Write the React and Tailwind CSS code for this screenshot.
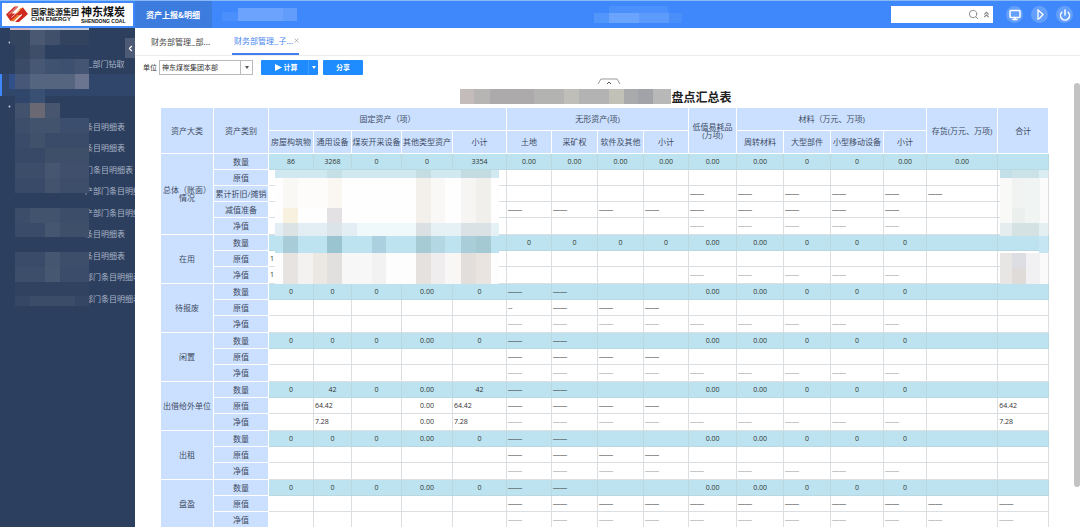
import { Search, ChevronsUp, Monitor, Power, ChevronLeft, X } from 'lucide-react';

const DASH = '——';

const COLUMN_WIDTHS = [53, 55, 45, 38, 50, 51, 54, 45, 46, 46, 45, 48, 47, 47, 53, 43, 71, 51];

const SUB_HEADERS_LEFT = [
  '房屋构筑物', '通用设备', '煤炭开采设备', '其他类型资产', '小计',
  '土地', '采矿权', '软件及其他', '小计',
];
const SUB_HEADERS_RIGHT = ['周转材料', '大型部件', '小型移动设备', '小计'];

// One string per row: "-" is a dash cell, "." is an empty cell
const IDLE_COUNT = '0 0 0 0.00 0 - - . . 0.00 0.00 0 0 0 . .';
const IDLE_ORIGIN = '. . . . . - - - - . . . . . . .';
const IDLE_NET = '. . . . . - - - - - - - - - . .';

const GROUPS = [
  {
    name: '总体（账面）\n情况',
    rows: [
      { label: '数量', cells: '86 3268 0 0 3354 0.00 0.00 0.00 0.00 0.00 0.00 0 0 0.00 0.00 .' },
      { label: '原值', cells: '. . . . . . . . . . . . . . . .' },
      { label: '累计折旧/摊销', cells: '. . . . . . . . . - - - - - - .' },
      { label: '减值准备', cells: '. . . . . - - - - - - - - - . .' },
      { label: '净值', cells: '. . . . . . . . . - - - - - . .' },
    ],
  },
  {
    name: '在用',
    rows: [
      { label: '数量', cells: '. . . . . 0 0 0 0 0.00 0.00 0 0 0 . .' },
      { label: '原值', cells: '1 . . . . . . . . . . . . . . .' },
      { label: '净值', cells: '1 . . . . . . . . - - - - - . .' },
    ],
  },
  {
    name: '待报废',
    rows: [
      { label: '数量', cells: IDLE_COUNT },
      { label: '原值', cells: '. . . . . -- - - - . . . . . . .' },
      { label: '净值', cells: IDLE_NET },
    ],
  },
  {
    name: '闲置',
    rows: [
      { label: '数量', cells: IDLE_COUNT },
      { label: '原值', cells: IDLE_ORIGIN },
      { label: '净值', cells: IDLE_NET },
    ],
  },
  {
    name: '出借给外单位',
    rows: [
      { label: '数量', cells: '0 42 0 0.00 42 - - . . 0.00 0.00 0 0 0 . .' },
      { label: '原值', cells: '. 64.42 . 0.00 64.42 - - - - . . . . . . 64.42' },
      { label: '净值', cells: '. 7.28 . 0.00 7.28 - - - - - - - - - . 7.28' },
    ],
  },
  {
    name: '出租',
    rows: [
      { label: '数量', cells: IDLE_COUNT },
      { label: '原值', cells: IDLE_ORIGIN },
      { label: '净值', cells: IDLE_NET },
    ],
  },
  {
    name: '盘盈',
    rows: [
      { label: '数量', cells: IDLE_COUNT },
      { label: '原值', cells: '. . . . . - - - - - - - - - - -' },
      { label: '净值', cells: '. . . . . - - - - - - - - - - -' },
    ],
  },
];

const MENU_ITEMS = [
  '条目明细表', '条目明细表', '门条目明细表', '产部门条目明细表', '产部门条目明细表',
  '条目明细表', '条目明细表', '部门条目明细表', '部门条目明细表',
];

// Masked areas, each tile is [x, y, width, height, colour]
const SIDEBAR_TILES = [
  [10, 0, 20, 2, '#d9b9c2'], [30, 0, 59, 2, '#c3cad6'],
  [10, 2, 20, 15, '#33455f'], [30, 2, 15, 15, '#4a5871'], [45, 2, 15, 15, '#404f6a'], [60, 2, 29, 15, '#31435f'],
  [15, 17, 15, 14, '#34465f'], [30, 17, 15, 14, '#3e4d68'],
  [15, 31, 15, 15, '#3a4b68'], [30, 31, 15, 15, '#465873'], [45, 31, 15, 15, '#3f5270'], [60, 31, 15, 15, '#3d5070'], [75, 31, 14, 15, '#435572'],
  [9, 46, 6, 15, '#31508a'], [15, 46, 15, 15, '#475777'], [30, 46, 15, 15, '#54667f'], [45, 46, 30, 15, '#55647f'], [75, 46, 14, 15, '#6b7590'],
  [15, 61, 15, 14, '#30476b'], [30, 61, 15, 14, '#395073'],
  [15, 75, 15, 15, '#42516c'], [30, 75, 15, 15, '#696873'], [45, 75, 15, 15, '#47556e'],
  [15, 90, 15, 15, '#3c4e6a'], [30, 90, 30, 15, '#42536d'], [60, 90, 29, 15, '#3b4e6d'],
  [15, 105, 74, 15, '#394b69'], [30, 105, 15, 15, '#40516c'],
  [15, 120, 30, 15, '#374966'], [45, 120, 44, 15, '#3e4f6a'],
  [15, 135, 30, 15, '#3c4d69'], [45, 135, 15, 15, '#465670'], [60, 135, 29, 15, '#404f6c'],
  [15, 150, 30, 15, '#384a67'], [45, 150, 15, 15, '#43536e'], [60, 150, 29, 15, '#3d4e6a'],
  [15, 180, 74, 15, '#3b4d69'], [30, 180, 30, 15, '#42536d'],
  [15, 195, 30, 14, '#394b68'], [45, 195, 15, 14, '#455670'], [60, 195, 29, 14, '#3e4f6a'],
  [15, 224, 30, 15, '#394b68'], [45, 224, 15, 15, '#455670'], [60, 224, 29, 15, '#3c4e6a'],
  [15, 239, 30, 15, '#3c4e6a'], [45, 239, 15, 15, '#465771'], [60, 239, 29, 15, '#3a4c69'],
  [15, 254, 74, 14, '#304260'], [15, 268, 15, 10, '#354765'], [30, 268, 45, 10, '#3b4c68'], [75, 268, 14, 10, '#344664'],
];

const TABLE_TILES = [
  [0, 0, 224, 8, '#d0e9f0'], [0, 8, 224, 45, '#fefefe'],
  [8, 8, 15, 30, '#faf8f5'], [23, 8, 30, 30, '#fdfcfa'], [53, 8, 14, 30, '#faf6f2'], [52, 0, 15, 8, '#c5dfe6'],
  [141, 0, 15, 8, '#c5dde2'], [186, 0, 30, 8, '#c2dce2'],
  [141, 8, 15, 45, '#f3f0ec'], [156, 8, 14, 45, '#f9f8f6'], [186, 8, 15, 45, '#f6f5f3'], [201, 8, 15, 45, '#f1efec'],
  [8, 38, 15, 15, '#f8f1df'], [52, 38, 15, 15, '#e3e1e3'],
  [0, 53, 82, 13, '#e2eef3'], [82, 53, 59, 13, '#eff8fb'], [141, 53, 83, 13, '#e6f1f5'],
  [8, 53, 15, 13, '#dbe3e5'], [52, 53, 15, 13, '#dbe5e9'], [141, 53, 15, 13, '#dbe0e2'], [186, 53, 30, 13, '#dae2e5'],
  [0, 66, 224, 17, '#bce3ef'], [8, 66, 15, 17, '#a9ccd9'], [52, 66, 15, 17, '#9bc4d1'], [97, 66, 14, 17, '#abd1e0'],
  [141, 66, 15, 17, '#a7cbd5'], [156, 66, 14, 17, '#b3d8e4'], [186, 66, 15, 17, '#a9ced9'], [201, 66, 15, 17, '#a5c9d3'],
  [0, 83, 224, 31, '#fdfdfd'], [8, 83, 15, 31, '#e6e3e1'], [23, 83, 15, 31, '#f3f2f0'], [38, 83, 14, 31, '#ebe7e3'], [52, 83, 15, 31, '#e2dfdf'],
  [67, 83, 30, 31, '#f8f7f7'], [97, 83, 14, 31, '#f3f2f2'], [141, 83, 15, 31, '#e4e1de'], [156, 83, 14, 31, '#efeded'],
  [170, 83, 16, 31, '#f8f7f6'], [186, 83, 15, 31, '#e1dedc'], [201, 83, 15, 31, '#e9e4df'],
];

const TOTAL_TILES = [
  [0, 0, 12, 8, '#c3dfe7'], [12, 0, 27, 8, '#cbe3e8'], [39, 0, 9, 8, '#d9edf3'],
  [0, 8, 12, 45, '#f9f9f8'], [12, 8, 13, 30, '#f1f3f2'], [25, 8, 15, 45, '#f0f4f3'], [12, 38, 13, 15, '#ebefed'], [40, 8, 8, 45, '#fbfbfb'],
  [0, 53, 12, 13, '#e5edef'], [12, 53, 27, 13, '#d5e2e3'], [39, 53, 9, 13, '#e4eff1'],
  [39, 66, 9, 17, '#c5e6f2'],
  [0, 83, 12, 31, '#e7e6e5'], [12, 83, 14, 15, '#dddde4'], [12, 98, 14, 16, '#dedbd8'], [26, 83, 14, 31, '#f1f1f3'], [40, 83, 8, 31, '#fafafa'],
];

const TITLE_TILES = [
  [0, 0, 14, 15, '#c3bcba'], [14, 0, 16, 15, '#b6b5b4'], [30, 0, 44, 15, '#acaaaa'], [74, 0, 30, 15, '#b3b3b2'],
  [104, 0, 15, 15, '#bfbeb9'], [119, 0, 30, 15, '#b3b3b3'], [149, 0, 15, 15, '#c2c1b8'], [164, 0, 14, 15, '#a9aaab'],
  [178, 0, 15, 15, '#a2a3a8'], [193, 0, 19, 15, '#b8b8b8'],
];

const Mosaic = ({ tiles, width, height, className }) => (
  <svg width={width} height={height} className={className} shapeRendering="crispEdges" aria-hidden="true">
    {tiles.map(([x, y, w, h, fill], i) => (
      <rect key={i} x={x} y={y} width={w} height={h} fill={fill} />
    ))}
  </svg>
);

const Logo = () => (
  <div className="flex h-[23px] w-[131px] shrink-0 items-center gap-[2px] bg-white pl-[3px]">
    <svg width="24" height="19" viewBox="0 0 24 19" aria-hidden="true">
      <path d="M1 9.500 9.500 1.500h4L6.500 8.500h4.500L16 3.500l2-1 5 6.500-9 8h-4l7-7h-4.500L7.500 15.500l-2 .5z" fill="#cf2a20" />
      <path d="M10.500 8.500 15.500 3l2.500-.5-6 6z" fill="#ef8a2c" />
      <path d="M5.500 16 12.500 10h3l-7 6.500z" fill="#e9792a" />
      <path d="M4 9.500 11.500 2M6.500 12.500 14.500 5M10 15.500 17 9" stroke="#fff" strokeWidth=".7" fill="none" />
    </svg>
    <div className="flex flex-col text-[#222]">
      <span className="text-[8px] leading-[9px] font-bold whitespace-nowrap">国家能源集团</span>
      <span className="font-['Liberation_Sans'] text-[6px] leading-[7px] font-bold whitespace-nowrap">CHN ENERGY</span>
    </div>
    <div className="flex flex-col text-[#111]">
      <span className="text-[11px] leading-[13px] font-bold whitespace-nowrap">神东煤炭</span>
      <span className="font-['Liberation_Sans'] text-[5px] leading-[7px] font-bold whitespace-nowrap">SHENDONG COAL</span>
    </div>
  </div>
);

const Header = () => (
  <header className="flex h-7 shrink-0 items-center border-t border-[#86b9f8] bg-[#3f88fb] pl-[2px]">
    <Logo />
    <nav className="ml-[2px] flex h-full items-center">
      <a href="#report" className="flex h-full w-[77px] items-center bg-[#3d7cdf] pl-[11px] text-[8px] font-bold whitespace-nowrap text-white">
        资产上报&amp;明细
      </a>
      <Mosaic
        width={76}
        height={13}
        className="ml-[10px]"
        tiles={[[0, 4, 16, 9, '#4a8ffb'], [16, 0, 45, 13, '#6ba3fd'], [61, 0, 14, 13, '#629dfc']]}
      />
    </nav>
    <div className="flex flex-1 justify-center pl-[86px]">
      <Mosaic
        width={88}
        height={17}
        tiles={[[15, 0, 59, 7, '#4b90fb'], [0, 7, 15, 10, '#5396fb'], [15, 7, 30, 10, '#6aa4fd'], [45, 7, 30, 10, '#5c9bfc'], [75, 7, 13, 10, '#4a8efa']]}
      />
    </div>
    <form className="flex h-[17px] w-[102px] items-center gap-[3px] bg-white pr-[2px]">
      <input type="text" aria-label="搜索" className="min-w-0 flex-1 bg-transparent px-1 text-[8px] outline-none" />
      <button type="button" aria-label="搜索按钮"><Search size={11} strokeWidth={2} color="#888" /></button>
      <button type="button" aria-label="收起"><ChevronsUp size={9} strokeWidth={3} color="#888" /></button>
    </form>
    <div className="mr-[7px] ml-[13px] flex gap-2 text-white">
      <button type="button" aria-label="桌面" className="flex size-[17px] items-center justify-center rounded-full bg-[#659ffc]">
        <Monitor size={12} strokeWidth={3} />
      </button>
      <button type="button" aria-label="播放" className="flex size-[17px] items-center justify-center rounded-full bg-[#659ffc]">
        <svg width="8" height="11" viewBox="0 0 8 11" fill="none" stroke="#fff" strokeWidth="1.3">
          <path d="M2 1v9l1.500-.5L7 5.500z" />
        </svg>
      </button>
      <button type="button" aria-label="退出" className="flex size-[17px] items-center justify-center rounded-full bg-[#659ffc]">
        <Power size={12} strokeWidth={3} />
      </button>
    </div>
  </header>
);

const GroupMarker = () => (
  <svg width="3" height="3" className="ml-2" aria-hidden="true">
    <circle cx="1.5" cy="1.5" r="1" fill="#c3cddb" />
  </svg>
);

const Sidebar = () => (
  <aside className="relative w-[135px] shrink-0 bg-[#2c3f5e] text-[8px] whitespace-nowrap text-[#a9b5c8]">
    <nav>
      <div className="flex h-[25px] items-center pt-1"><GroupMarker /></div>
      <a href="#drill" className="flex h-[21px] items-center pl-[88px]">_部门钻取</a>
      <a href="#current" aria-label="当前报表" className="block h-[22px] border-l-2 border-[#3f88fb] bg-[#30476b]" />
      <div className="flex h-5 items-center"><GroupMarker /></div>
      <div className="overflow-hidden">
        {MENU_ITEMS.map((item, i) => (
          <a key={i} href={`#item-${i}`} className="flex h-[21px] items-center pl-[85px] even:h-[22px]">{item}</a>
        ))}
      </div>
    </nav>
    <Mosaic tiles={SIDEBAR_TILES} width={89} height={278} className="pointer-events-none absolute top-0 left-0" />
    <button
      type="button"
      aria-label="收起菜单"
      className="absolute top-[10px] right-0 flex h-5 w-[10px] items-center justify-center bg-[#4c5a75] text-white"
    >
      <ChevronLeft size={9} strokeWidth={3} />
    </button>
  </aside>
);

const Tabs = () => (
  <div className="flex h-7 shrink-0 border-b border-[#ececec] pl-2 text-[8px] whitespace-nowrap">
    <button type="button" className="w-[74px] pl-2 text-left text-[#444]">财务部管理_部...</button>
    <div className="ml-[15px] flex w-[67px] items-center border-b-2 border-[#3f7df0] pl-[2px] text-[#4a86f0]">
      <button type="button" className="flex-1 text-left">财务部管理_子...</button>
      <button type="button" aria-label="关闭"><X size={7} color="#888" /></button>
    </div>
  </div>
);

const Toolbar = () => (
  <div className="flex h-[22px] shrink-0 items-center pt-[1px] pl-2 text-[7px] whitespace-nowrap text-[#333]">
    <label htmlFor="unit">单位</label>
    <div className="relative ml-[2px] h-[15px] w-[94px] border border-[#bbb]">
      <select id="unit" className="h-full w-full appearance-none bg-white pl-[2px] text-[7px] outline-none">
        <option>神东煤炭集团本部</option>
      </select>
      <span className="pointer-events-none absolute inset-y-0 right-0 flex w-3 items-center justify-center border-l border-[#bbb]">
        <svg width="4" height="3" aria-hidden="true"><path d="M0 0h4L2 3z" fill="#555" /></svg>
      </span>
    </div>
    <div className="ml-2 flex h-[15px] w-[57px] rounded-[1px] bg-[#1e8cff] text-white">
      <button type="button" className="flex flex-1 items-center justify-center gap-[2px] pl-[3px] font-bold">
        <svg width="7" height="7" aria-hidden="true"><path d="M0 0l7 3.5L0 7z" fill="#fff" /></svg>
        计算
      </button>
      <button type="button" aria-label="更多计算" className="flex w-[10px] items-center justify-center border-l border-[#3f9dff]">
        <svg width="4" height="3" aria-hidden="true"><path d="M0 0h4L2 3z" fill="#fff" /></svg>
      </button>
    </div>
    <button type="button" className="ml-[5px] h-[15px] w-10 rounded-[1px] bg-[#1e8cff] font-bold text-white">分享</button>
  </div>
);

const HeadCell = ({ children, ...props }) => (
  <th className="border-r border-b border-white bg-[#cbe0ff] p-0 text-[8px] leading-[8px] font-normal whitespace-pre" {...props}>
    {children}
  </th>
);

const ValueCell = ({ value, count, faint }) => {
  const dash = value === '-';
  const left = value.startsWith('-') || value === '1' || (!count && value !== '0.00');
  return (
    <td
      className={[
        'border-r border-b p-0 leading-[8px] whitespace-nowrap',
        count ? 'border-[#b9d9e2] bg-[#bce3ef]' : 'border-[#dcdfe2] bg-white',
        left ? 'pl-[1px] text-left' : 'text-center',
        dash ? "font-['Liberation_Sans']" : '',
        faint && dash ? 'text-[#999]' : 'text-[#333]',
      ].join(' ')}
    >
      {dash ? DASH : value.replace(/^\.$/, '')}
    </td>
  );
};

const AssetTable = () => (
  <table className="w-full table-fixed border-separate border-spacing-0 font-['Open_Sans','Noto_Sans_CJK_SC',sans-serif] text-[7px] text-[#3f4c63]">
    <colgroup>
      {COLUMN_WIDTHS.map((width, i) => <col key={i} style={{ width }} />)}
    </colgroup>
    <thead>
      <tr className="h-[23px]">
        <HeadCell rowSpan={2}>资产大类</HeadCell>
        <HeadCell rowSpan={2}>资产类别</HeadCell>
        <HeadCell colSpan={5}>固定资产（项）</HeadCell>
        <HeadCell colSpan={4}>无形资产(项)</HeadCell>
        <HeadCell rowSpan={2}>{'低值易耗品\n(万项)'}</HeadCell>
        <HeadCell colSpan={4}>材料（万元、万项)</HeadCell>
        <HeadCell rowSpan={2}>存货(万元、万项)</HeadCell>
        <HeadCell rowSpan={2}>合计</HeadCell>
      </tr>
      <tr className="h-[23px]">
        {SUB_HEADERS_LEFT.map((name, i) => <HeadCell key={i}>{name}</HeadCell>)}
        {SUB_HEADERS_RIGHT.map((name, i) => <HeadCell key={i}>{name}</HeadCell>)}
      </tr>
    </thead>
    {GROUPS.map((group) => (
      <tbody key={group.name}>
        {group.rows.map((row, i) => (
          <tr key={row.label} className="h-4 last:h-[17px]">
            {i === 0 && <HeadCell scope="rowgroup" rowSpan={group.rows.length}>{group.name}</HeadCell>}
            <HeadCell scope="row">{row.label}</HeadCell>
            {row.cells.split(' ').map((value, c) => (
              <ValueCell key={c} value={value} count={i === 0} faint={row.label === '净值'} />
            ))}
          </tr>
        ))}
      </tbody>
    ))}
  </table>
);

const Report = () => (
  <div className="flex min-h-0 flex-1">
    <section className="min-w-0 flex-1 overflow-hidden pr-[25px] pl-[26px]">
      <div className="flex h-[7px] justify-center pl-2">
        <button type="button" aria-label="收起工具栏">
          <svg width="24" height="7" viewBox="0 0 24 7" fill="none" stroke="#999">
            <path d="M1 6 4 1h16l3 5" />
            <path d="M10 6l2-2 2 2" stroke="#555" />
          </svg>
        </button>
      </div>
      <h1 className="flex h-[23px] items-center justify-center pr-[18px] text-[12px] font-bold whitespace-nowrap text-[#222]">
        <Mosaic tiles={TITLE_TILES} width={211} height={15} />
        盘点汇总表
      </h1>
      <div className="relative">
        <AssetTable />
        <Mosaic tiles={TABLE_TILES} width={224} height={114} className="absolute top-[62px] left-[114px]" />
        <Mosaic tiles={TOTAL_TILES} width={48} height={114} className="absolute top-[62px] right-[1px]" />
      </div>
    </section>
    <div className="w-[6px] shrink-0 pt-[5px]">
      <div className="h-[91%] rounded-full bg-[#c3c3c3]" />
    </div>
  </div>
);

const App = () => {
  return (
    <div className="flex h-screen flex-col overflow-hidden bg-white font-['Noto_Sans_CJK_SC',sans-serif]">
      <Header />
      <div className="flex min-h-0 flex-1">
        <Sidebar />
        <main className="flex min-w-0 flex-1 flex-col">
          <Tabs />
          <Toolbar />
          <Report />
        </main>
      </div>
    </div>
  );
};

export default App;
